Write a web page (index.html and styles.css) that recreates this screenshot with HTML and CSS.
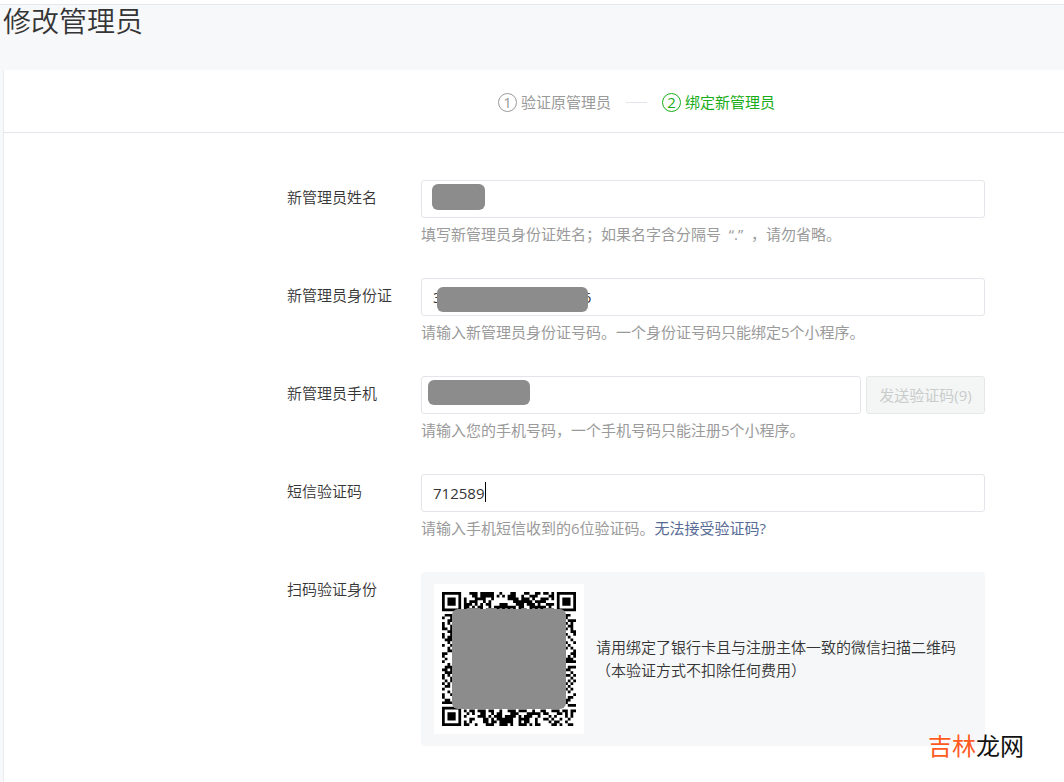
FILE: index.html
```html
<!DOCTYPE html>
<html lang="zh-CN">
<head>
<meta charset="utf-8">
<title>修改管理员</title>
<link rel="stylesheet" href="styles.css">
</head>
<body>
<header class="page-head"><h1 class="page-title">修改管理员</h1></header>
<main class="card">
  <ol class="steps">
    <li class="step"><span class="step-num">1</span>验证原管理员</li>
    <li class="step-line" aria-hidden="true"></li>
    <li class="step step-active"><span class="step-num">2</span>绑定新管理员</li>
  </ol>
  <form class="form">
    <div class="row">
      <label class="label" for="name">新管理员姓名</label>
      <div class="field">
        <div class="control"><input class="input" id="name" type="text"><span class="mask mask-name"></span></div>
        <p class="hint">填写新管理员身份证姓名；如果名字含分隔号&nbsp; “.” &nbsp;，请勿省略。</p>
      </div>
    </div>
    <div class="row">
      <label class="label" for="idcard">新管理员身份证</label>
      <div class="field">
        <div class="control"><input class="input" id="idcard" type="text" value="300000 000000000006"><span class="mask mask-id"></span></div>
        <p class="hint">请输入新管理员身份证号码。一个身份证号码只能绑定5个小程序。</p>
      </div>
    </div>
    <div class="row">
      <label class="label" for="phone">新管理员手机</label>
      <div class="field">
        <div class="control"><input class="input" id="phone" type="tel"><span class="mask mask-phone"></span><button class="send" type="button" disabled>发送验证码(9)</button></div>
        <p class="hint">请输入您的手机号码，一个手机号码只能注册5个小程序。</p>
      </div>
    </div>
    <div class="row">
      <label class="label" for="code">短信验证码</label>
      <div class="field">
        <div class="control"><input class="input" id="code" type="text" value="712589"><span class="caret"></span></div>
        <p class="hint">请输入手机短信收到的6位验证码。<a class="link" href="#">无法接受验证码?</a></p>
      </div>
    </div>
    <div class="row">
      <span class="label">扫码验证身份</span>
      <div class="field scan">
        <div class="qr">
          <svg class="qr-code" viewBox="0 0 49 49" role="img" aria-label="二维码">
            <g fill="none" stroke="#000">
              <path d="M.5.5h6v6h-6zM42.5.5h6v6h-6zM.5 42.5h6v6h-6z"/>
              <path stroke-width="3" d="M2 3.5h3M44 3.5h3M2 45.5h3"/>
              <path d="M10 .5h3m1 0h5m2 0h1m3 0h2m3 0h2m2 0h2m1 0h2m1 0h1
M11 1.5h2m1 0h5m1 0h1m1 0h1m1 0h3m2 0h1m2 0h3m4 0h2
M8 2.5h1m3 0h4m2 0h1m5 0h4m1 0h3m1 0h1m2 0h3m1 0h1
M8 3.5h1m1 0h3m2 0h1m1 0h1m8 0h7m1 0h4
M8 4.5h3m1 0h1m1 0h1m1 0h2m3 0h3m3 0h3m1 0h3m1 0h1m2 0h3
M8 5.5h2m1 0h1m1 0h2m2 0h1m1 0h8m1 0h2m2 0h6m1 0h1
M8 6.5h1m1 0h1m1 0h1m1 0h1m1 0h1m1 0h1m1 0h1m1 0h1m1 0h1m1 0h1m1 0h1m1 0h1m1 0h1m1 0h1m1 0h1m1 0h1m1 0h1m1 0h1"/>
              <path d="M1 8.5h3M0 9.5h1m2 0h1M2 10.5h2M0 11.5h1m1 0h1M0 12.5h1m2 0h1M0 13.5h2m1 0h1M2 14.5h2M0 15.5h1m2 0h1M0 16.5h1m1 0h2M1 17.5h3M2 18.5h1M0 19.5h1m2 0h1M2 20.5h1M2 21.5h2M0 22.5h2M0 23.5h1M1 24.5h1M0 25.5h1M2 26.5h1M1 27.5h3M0 28.5h2m1 0h1M1 29.5h3M0 30.5h1m1 0h1M0 31.5h1m2 0h1M1 32.5h1m1 0h1M0 33.5h1m1 0h1M1 34.5h2M0 35.5h1M2 36.5h1M0 37.5h1m2 0h1M0 38.5h1M1 39.5h2M0 40.5h4"/>
              <path d="M45 8.5h2M45 9.5h1M46 10.5h3M45 11.5h1m1 0h1M46 12.5h2M45 13.5h1m1 0h1M47 14.5h2M45 15.5h1m2 0h1M46 16.5h1M47 17.5h1M45 18.5h1m2 0h1M46 19.5h1M45 20.5h1m1 0h1M48 21.5h1M47 22.5h2M46 23.5h1m1 0h1M45 24.5h3M45 25.5h4M46 27.5h3M45 28.5h2M47 29.5h1M45 30.5h2m1 0h1M47 31.5h1M46 32.5h1m1 0h1M45 33.5h1m1 0h1M46 34.5h1M45 35.5h1m1 0h1M46 36.5h1M48 37.5h1M46 38.5h2M45 39.5h2M45 40.5h1M46 41.5h3"/>
              <path d="M8 43.5h1m1 0h2m1 0h3m1 0h2m2 0h1m2 0h3m1 0h3m2 0h1m2 0h2m2 0h3m1 0h2m1 0h2
M9 44.5h1m1 0h1m2 0h2m2 0h1m1 0h2m3 0h3m3 0h5m1 0h2m3 0h2m1 0h1m1 0h1
M8 45.5h1m4 0h3m1 0h1m1 0h3m1 0h4m1 0h1m1 0h3m2 0h1m3 0h1m1 0h1m3 0h1m1 0h1
M10 46.5h2m3 0h2m1 0h1m1 0h6m2 0h4m2 0h1m2 0h2m1 0h1m2 0h1m2 0h1
M8 47.5h1m1 0h1m4 0h2m1 0h2m1 0h5m2 0h1m1 0h2m2 0h1m4 0h1m1 0h2m2 0h1
M8 48.5h2m2 0h1m3 0h3m2 0h3m1 0h1m2 0h3m1 0h1m1 0h2m4 0h2m1 0h1m2 0h2"/>
            </g>
          </svg>
          <span class="mask mask-qr"></span>
        </div>
        <p class="scan-text">请用绑定了银行卡且与注册主体一致的微信扫描二维码<br>（本验证方式不扣除任何费用）</p>
      </div>
    </div>
  </form>
</main>
<div class="watermark"><span class="watermark-accent">吉林</span>龙网</div>
</body>
</html>
```
FILE: styles.css
```css
* { box-sizing: border-box; }

body {
  margin: 0;
  padding: 4px 0 0;
  background: #fff;
  color: #353535;
  font: 350 15px/24px "Open Sans", "Noto Sans CJK SC", sans-serif;
  position: relative;
}

.page-head {
  border-top: 1px solid #e4e8eb;
  background: #f7f8fa;
  padding: 0 3px 32px;
}

.page-title {
  margin: 0;
  font-size: 28px;
  font-weight: 350;
  line-height: 33px;
}

.card {
  border-left: 3px solid #f7f8fa;
  box-shadow: inset 1px 0 #e9ebee;
}

.steps {
  display: flex;
  justify-content: center;
  align-items: center;
  height: 63px;
  margin: 0;
  padding: 2px 0 0 206px;
  list-style: none;
  border-bottom: 1px solid #e4e5ea;
  color: #9a9a9a;
  font-weight: 400;
}

.step { display: flex; align-items: center; gap: 4px; }
.step-active { color: #1aad19; }

.step-num {
  width: 19px;
  height: 19px;
  border: 1px solid;
  border-radius: 50%;
  line-height: 17px;
  text-align: center;
}

.step-line { width: 21px; margin: 0 15px; border-top: 1px solid #e4e5ea; }

.form {
  display: flex;
  flex-direction: column;
  gap: 32px;
  padding: 47px 79px 36px 284px;
}

.row { display: flex; }
.label { flex: 0 0 134px; line-height: 34px; }
.field { flex: 1; min-width: 0; }
.control { display: flex; gap: 5px; position: relative; }

.input {
  flex: 1;
  min-width: 0;
  height: 38px;
  padding: 0 11px;
  border: 1px solid #e4e5ea;
  border-radius: 3px;
  background: #fff;
  color: #353535;
  font: inherit;
  font-weight: 400;
  outline: 0;
}

.send {
  width: 119px;
  border: 1px solid #e4e8ea;
  border-radius: 3px;
  padding: 0;
  background: #f4f6f6;
  color: #c9cccb;
  font: inherit;
  font-weight: 400;
}

.hint { margin: 4px 0 0; color: #9a9a9a; font-weight: 400; white-space: nowrap; }
.link { color: #576b95; text-decoration: none; }

.mask { position: absolute; border-radius: 6px; background: #8c8c8c; }
.mask-name { left: 11px; top: 4px; width: 53px; height: 26px; }
.mask-id { left: 16px; top: 9px; width: 151px; height: 25px; }
.mask-phone { left: 7px; top: 4px; width: 102px; height: 25px; }
.mask-qr { left: 18px; top: 25px; width: 114px; height: 100px; }

.caret { position: absolute; left: 64px; top: 8px; width: 1px; height: 20px; background: #000; }

.scan {
  display: flex;
  align-items: center;
  gap: 12px;
  padding: 12px 13px;
  border-radius: 4px;
  background: #f6f7f9;
}

.qr { position: relative; flex: 0 0 150px; height: 150px; padding: 8px; background: #fff; }
.qr-code { display: block; width: 134px; height: 134px; }
.scan-text { margin: 0; line-height: 23px; white-space: nowrap; }

.watermark {
  position: absolute;
  right: 40px;
  bottom: 18px;
  color: #111;
  font-size: 24px;
  font-weight: 400;
  line-height: 36px;
  text-shadow: 0 0 2px #fff, 0 0 2px #fff;
}

.watermark-accent { color: #ff5a1f; }
```
